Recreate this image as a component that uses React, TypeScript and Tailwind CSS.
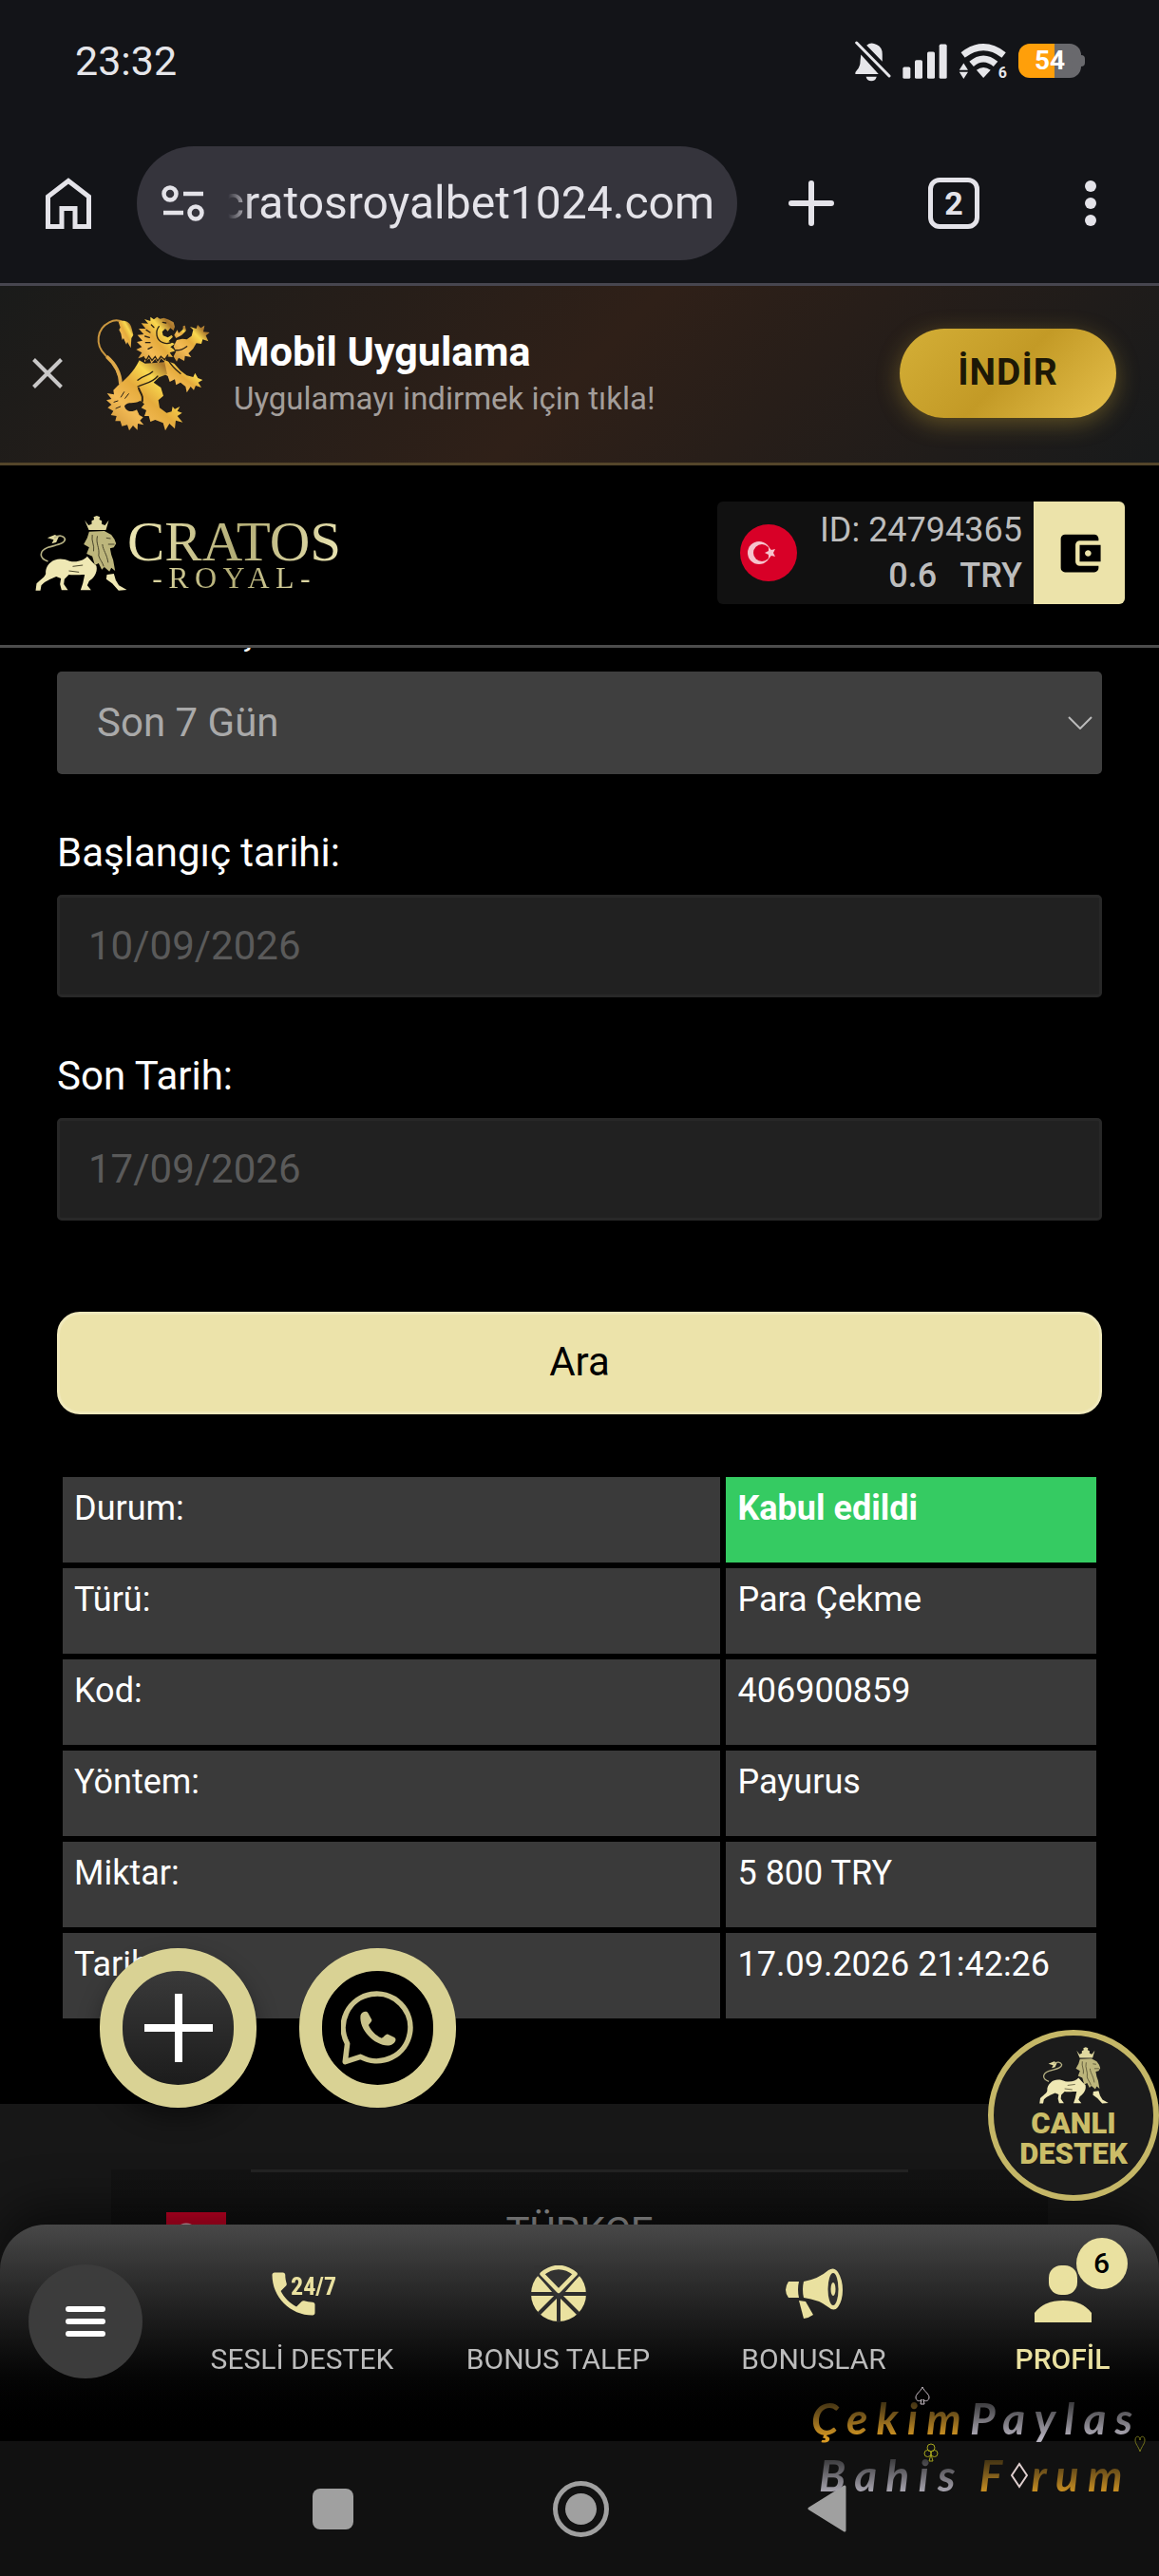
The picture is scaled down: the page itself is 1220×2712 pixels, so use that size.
import { type ReactNode } from "react";
import { MdAccountBalanceWallet, MdPhone } from "react-icons/md";

function RampantLion() {
  return (
    <svg viewBox="210 20 366 366" className="size-[122px]" aria-hidden="true">
      <defs>
        <linearGradient id="gold" x1="0" y1="1" x2="1" y2="0">
          <stop offset="0" stopColor="#c98f35" />
          <stop offset="0.3" stopColor="#f3bb55" />
          <stop offset="0.5" stopColor="#e5ab3c" />
          <stop offset="0.68" stopColor="#f9d84f" />
          <stop offset="0.84" stopColor="#a9762c" />
          <stop offset="1" stopColor="#dba548" />
        </linearGradient>
      </defs>
      <path d="M291 238C288 195 266 168 243 146C208 112 216 62 255 42C270 34 288 34 304 44" fill="none" stroke="#c9963f" strokeWidth="6" />
      <path d="M291 238C290 195 268 168 247 150" fill="none" stroke="#dfa94a" strokeWidth="11" />
      <g fill="url(#gold)">
        <path d="M284 40C300 33 322 38 326 62L331 82L325 92L323 123L312 104L309 112L300 92L296 98L292 78L286 66L290 58Z" />
        <path d="M385 25L396 33L406 25L415 31L428 28L444 34L458 42L462 56L458 68L448 60L440 70L432 62L422 72L425 84L440 90L452 82L456 88L442 102L462 110L448 120L465 132L446 138L456 152L436 150L432 168L418 156L410 172L400 158L388 172L382 156L366 168L366 150L346 156L358 138L340 128L358 120L342 104L360 100L344 82L364 80L348 62L370 62L356 45L378 46L366 32L385 38Z" />
        <path d="M460 82L470 66L474 76L488 64L488 54L494 52L498 68L484 82L466 92Z" />
        <path d="M458 118L468 98L486 94L500 96L515 85L520 66L510 56L530 62L534 50L544 60L556 52L552 72L572 74L560 84L568 102L550 96L546 110L530 108L520 125L505 140L514 152L494 148L492 164L474 154L468 166L458 150L466 134Z" />
        <path d="M430 162L460 172L480 195L500 210L520 215L526 202L535 218L550 224L536 232L546 248L528 242L522 256L512 245L500 264L496 245L480 232L466 240L462 222L446 230L440 212L420 200Z" />
        <path d="M350 162L368 172L430 168L438 206L412 216L395 232L418 248L426 274L410 288L414 312L436 328L452 324L455 308L462 316L478 308L470 322L485 328L470 338L487 358L465 352L462 378L445 362L432 384L425 360L400 350L385 356L380 338L366 338L372 320L356 312L366 300L352 290C332 302 315 290 303 306C306 324 326 328 342 318L350 335L362 342L352 352L364 366L345 362L344 382L330 368L318 384L312 366L295 370L290 354L274 354L278 338L260 335L268 322L250 312L262 302L246 288L262 284L248 266L270 270L268 256L282 242C304 225 332 200 350 162Z" />
      </g>
      <g fill="none" stroke="#2b2114" strokeWidth="4" strokeLinecap="round">
        <path d="M412 55C400 70 402 98 424 106C440 112 452 106 458 98" />
        <path d="M362 152L372 162L380 148L390 162L400 150L408 164L418 150L430 160L440 146" />
        <path d="M345 245C362 235 390 235 408 212" />
        <path d="M348 250C350 262 368 275 356 300" strokeWidth="6" />
        <path d="M345 225C360 210 378 212 392 198" />
        <path d="M440 160C452 180 462 190 480 204M462 130C480 132 490 126 500 118" />
        <path d="M372 66L384 74M368 86L382 90M370 106L384 106M378 126L390 120M388 50L396 58M424 42L434 44" />
        <path d="M292 278L302 262M305 282L316 268M270 294L282 290M276 314L290 308" strokeWidth="3" />
      </g>
    </svg>
  );
}

function CrownedLion({ className }: { className: string }) {
  return (
    <svg viewBox="22 652 290 237" className={className} aria-hidden="true">
      <g fill="#e0d9a0">
        <path d="M178 666L190 682L200 678L200 668L208 664L206 656L216 652L226 656L224 664L232 668L232 678L242 682L254 666L245 697L191 697Z" />
        <path d="M60 722L84 712L96 718L88 736L74 740L80 728Z" />
        <path d="M70 800C85 785 110 786 130 795C155 800 175 792 186 780L202 798L215 810C220 832 205 850 192 858L186 872L198 887L165 887L172 866L178 838C165 838 140 840 128 838L114 852L112 868L125 887L105 887L100 868L103 850L88 844C70 852 50 860 41 872L38 888L23 888L26 866C40 852 52 846 55 835C54 820 60 808 70 800Z" fill="#efe8b4" />
        <path d="M248 838L270 835L276 855L286 872L311 886L285 888L265 866L246 852Z" fill="#efe8b4" />
      </g>
      <path d="M62 796C34 786 32 764 62 752C86 744 114 742 116 726C112 714 96 712 82 722" fill="none" stroke="#b5b083" strokeWidth="5" />
      <path d="M192 702L240 700L262 712L272 726L277 740L270 752L258 755L262 775L268 792L274 826L262 816L256 828L240 814L232 822L222 802L210 808L202 780L184 772L192 752L175 742L186 722Z" fill="#bdb67c" />
      <g fill="none" stroke="#4a462c" strokeWidth="3">
        <path d="M202 712C198 734 210 744 206 764M218 716C212 740 226 752 222 778C226 792 234 798 238 812M234 742C236 762 248 772 252 800" />
        <path d="M246 722L260 724M252 742L272 742" />
        <path d="M140 812L172 808M128 826L160 830" />
      </g>
    </svg>
  );
}

function StatusBar() {
  return (
    <div className="flex h-32 items-center justify-between pr-[78px] pl-[79px] text-[#e6e6ea]">
      <span className="text-[43px] leading-[48px]">23:32</span>
      <div className="flex items-center">
        <svg viewBox="62 60 118 130" className="mr-3 h-[43px] w-[39px]" fill="currentColor" aria-hidden="true">
          <path d="M102 74Q116 62 134 72Q152 80 152 102V126Z" />
          <path d="M84 104L140 166H66Q64 160 72 152Q82 142 82 122Z" />
          <path d="M100 174H134Q130 188 117 188Q104 188 100 174Z" />
          <path d="M70 66L174 172" stroke="currentColor" strokeWidth="9" strokeLinecap="round" />
        </svg>
        <svg viewBox="212 74 141 110" className="mr-3 h-[37px] w-[47px]" fill="currentColor" aria-hidden="true">
          <rect x="213" y="147" width="24" height="37" rx="5" />
          <rect x="251" y="125" width="24" height="59" rx="5" />
          <rect x="290" y="99" width="24" height="85" rx="5" />
          <rect x="328" y="75" width="24" height="109" rx="5" />
        </svg>
        <div className="relative mr-3 h-[37px] w-[51px]">
          <svg viewBox="387 74 152 112" className="size-full" fill="currentColor" aria-hidden="true">
            <path d="M400 110Q465 60 530 110" fill="none" stroke="currentColor" strokeWidth="21" />
            <path d="M427 139Q465 106 504 139" fill="none" stroke="currentColor" strokeWidth="21" />
            <path d="M443 158Q465 142 488 158L465 183Z" />
            <path d="M388 158L402 136L416 158ZM388 164H416L402 186Z" />
          </svg>
          <span className="absolute right-0 -bottom-[2px] text-[16px] leading-4 font-bold">6</span>
        </div>
        <div className="flex items-center">
          <div className="flex h-9 w-[66px] items-center justify-center rounded-xl bg-linear-to-r from-[#ff9f0a] from-58% to-[#69696d] to-58% text-[28px] leading-9 font-bold text-white">54</div>
          <div className="h-3 w-1 rounded-r-sm bg-[#69696d]" />
        </div>
      </div>
    </div>
  );
}

function BrowserBar() {
  return (
    <div className="flex h-[173px] items-center border-b-3 border-[#47464f] pt-[2px] pr-[66px] pl-12 text-[#e4e3e9]">
      <button aria-label="Ana sayfa">
        <svg viewBox="0 0 48 54" className="h-[54px] w-12" fill="none" stroke="currentColor" strokeWidth="5" aria-hidden="true">
          <path d="M2.500 51.500V20L24 3.500L45.500 20V51.500H31V32.500H17V51.500Z" />
        </svg>
      </button>
      <div className="ml-12 flex h-[120px] min-w-0 flex-1 items-center rounded-full bg-[#35343c] pr-6 pl-[26px]">
        <svg viewBox="0 0 46 38" className="h-[38px] w-[46px] shrink-0" fill="none" stroke="currentColor" strokeWidth="4.500" aria-hidden="true">
          <circle cx="9" cy="9" r="6.500" />
          <circle cx="36" cy="29" r="6.500" />
          <path d="M23 9H44M2 29H23" />
        </svg>
        <div className="ml-6 flex min-w-0 flex-1 justify-end overflow-hidden mask-l-from-95% text-[48px] leading-[60px]">
          <span>cratosroyalbet1024.com</span>
        </div>
      </div>
      <button className="ml-[54px]" aria-label="Yeni sekme">
        <svg viewBox="0 0 48 48" className="size-12" stroke="currentColor" strokeWidth="6" strokeLinecap="round" aria-hidden="true">
          <path d="M24 3V45M3 24H45" />
        </svg>
      </button>
      <button className="ml-[99px] flex size-[54px] items-center justify-center rounded-xl border-[5px] border-current text-[34px] leading-10 font-bold">2</button>
      <button className="ml-[111px] flex flex-col gap-[6px]" aria-label="Menü">
        <span className="size-3 rounded-full bg-current" />
        <span className="size-3 rounded-full bg-current" />
        <span className="size-3 rounded-full bg-current" />
      </button>
    </div>
  );
}

function AppBanner() {
  return (
    <section className="flex h-[189px] items-center border-b-3 border-[#54452a] bg-linear-[135deg] from-[#1a1b1a] via-[#2f2018] to-[#181a1b] pr-[45px] pb-[3px] pl-[34px]">
      <button aria-label="Kapat" className="text-[#c9c8c8]">
        <svg viewBox="0 0 32 32" className="size-8" stroke="currentColor" strokeWidth="4" aria-hidden="true">
          <path d="M1.500 1.500L30.500 30.500M30.500 1.500L1.500 30.500" />
        </svg>
      </button>
      <div className="ml-[34px]"><RampantLion /></div>
      <div className="ml-6 flex-1">
        <h2 className="text-[43px] leading-[54px] font-bold text-white">Mobil Uygulama</h2>
        <p className="text-[33px] leading-[45px] text-[#a39e9b]">Uygulamayı indirmek için tıkla!</p>
      </div>
      <button className="h-[94px] w-[228px] rounded-full bg-linear-[135deg] from-[#d4af37] via-[#c39a26] to-[#e6c04c] text-[39px] font-bold tracking-wide text-[#1d1806] shadow-[0_6px_24px_rgba(212,175,55,0.35)]">İNDİR</button>
    </section>
  );
}

function TurkishFlag({ className }: { className: string }) {
  return (
    <svg viewBox="0 0 60 60" className={className} preserveAspectRatio="xMidYMid slice" aria-hidden="true">
      <rect width="60" height="60" fill="#d80027" />
      <circle cx="20" cy="30" r="12" fill="#f6c3cc" />
      <circle cx="23" cy="30" r="9" fill="#d80027" />
      <path d="M26 30L30 28L30 24L33 27L37 26L35 30L37 34L33 33L30 36L30 32Z" fill="#f6c3cc" />
    </svg>
  );
}

function SiteHeader() {
  return (
    <header className="relative z-10 flex h-48 items-center justify-between border-b-3 border-[#4c4c4c] bg-black pr-9 pb-[5px] pl-[37px]">
      <a href="#" aria-label="Cratos Royal" className="flex items-end">
        <CrownedLion className="h-[79px] w-[97px]" />
        <span className="flex flex-col items-center bg-linear-[105deg] from-[#f0eab6] via-[#b3ad76] to-[#eee8b6] bg-clip-text font-['Liberation_Serif',serif] text-transparent">
          <span className="text-[59px] leading-[50px]">CRATOS</span>
          <span className="text-[32px] leading-[27px] tracking-[0.2em]">-ROYAL-</span>
        </span>
      </a>
      <div className="flex h-[108px] overflow-hidden rounded-md bg-[#111] text-[#bdbdbd]">
        <TurkishFlag className="mr-6 ml-6 size-[60px] self-center rounded-full" />
        <div className="flex flex-col justify-center pr-3 text-right text-[36px] leading-12">
          <span>ID: 24794365</span>
          <span className="flex justify-end gap-6 font-medium"><span>0.6</span><span>TRY</span></span>
        </div>
        <button aria-label="Cüzdan" className="flex w-24 items-center justify-center bg-[#ece3aa] text-black">
          <MdAccountBalanceWallet className="size-[53px]" />
        </button>
      </div>
    </header>
  );
}

function DateField({ id, label, value }: { id: string; label: string; value: string }) {
  return (
    <div className="flex flex-col gap-5">
      <label htmlFor={id} className="text-[42px] leading-12 text-white">{label}</label>
      <input id={id} type="text" readOnly value={value} className="h-[108px] w-full rounded-[5px] border-3 border-[#282828] bg-[#212121] px-[30px] pb-[2px] text-[42px] text-[#5a5a5a] outline-none" />
    </div>
  );
}

const details = [
  ["Durum:", "Kabul edildi"],
  ["Türü:", "Para Çekme"],
  ["Kod:", "406900859"],
  ["Yöntem:", "Payurus"],
  ["Miktar:", "5 800 TRY"],
  ["Tarih:", "17.09.2026 21:42:26"],
];

function History() {
  return (
    <main className="-mt-[43px] px-[60px] pb-[84px]">
      <form className="flex flex-col gap-[59px]" onSubmit={(e) => e.preventDefault()}>
        <div className="flex flex-col gap-5">
          <label htmlFor="period" className="text-[42px] leading-12 text-white">Dönem seçin:</label>
          <div className="relative">
            <select id="period" className="h-[108px] w-full appearance-none rounded-[5px] bg-[#3f3f3f] px-[42px] pb-[2px] text-[42px] text-[#a9a9a9] outline-none">
              <option>Son 7 Gün</option>
            </select>
            <svg viewBox="0 0 26 14" className="pointer-events-none absolute top-[47px] right-[10px] h-[14px] w-[26px]" fill="none" stroke="#bbb" strokeWidth="2" aria-hidden="true">
              <path d="M1 1L13 13L25 1" />
            </svg>
          </div>
        </div>
        <DateField id="start" label="Başlangıç tarihi:" value="10/09/2026" />
        <DateField id="end" label="Son Tarih:" value="17/09/2026" />
        <button type="submit" className="mt-[37px] h-[108px] rounded-[24px] border-3 border-[#f0e9bb] bg-[#ece3aa] pb-[3px] text-[42px] text-black">Ara</button>
      </form>
      <table className="mt-[60px] w-full table-fixed border-separate border-spacing-[6px] text-left text-[36px] leading-[42px] text-white">
        <colgroup>
          <col className="w-[64%]" />
          <col />
        </colgroup>
        <tbody>
          {details.map(([name, value], i) => (
            <tr key={name} className="h-[90px]">
              <th scope="row" className="bg-[#3a3a3a] px-3 pt-3 align-top font-normal">{name}</th>
              <td className={i === 0 ? "bg-[#35cb62] px-3 pt-3 align-top font-bold" : "bg-[#3a3a3a] px-3 pt-3 align-top"}>{value}</td>
            </tr>
          ))}
        </tbody>
      </table>
    </main>
  );
}

function SiteFooter() {
  return (
    <footer className="flex-1 bg-[#171717] px-[117px] pt-[69px]">
      <div className="bg-linear-to-b from-[#131313] to-[#101010]">
        <div className="mx-[147px] h-[3px] bg-[#232323]" />
        <div className="relative mt-[39px] flex items-center justify-center text-[42px] leading-12 text-[#a8a8a8]">
          <TurkishFlag className="absolute top-[3px] left-[58px] h-12 w-[63px]" />
          <span>TÜRKÇE</span>
        </div>
      </div>
    </footer>
  );
}

function FloatingButtons() {
  return (
    <>
      <div className="fixed bottom-[493px] left-[105px] z-20 flex gap-[45px]">
        <button aria-label="Ekle" className="flex h-[168px] w-[165px] items-center justify-center rounded-full border-24 border-[#d9d294] bg-linear-to-b from-[#3a3a3a] to-[#1c1c1c] shadow-[0_12px_24px_rgba(0,0,0,0.4)]">
          <svg viewBox="0 0 72 72" className="size-[72px]" stroke="#fff" strokeWidth="8" aria-hidden="true">
            <path d="M36 0V72M0 36H72" />
          </svg>
        </button>
        <a href="#whatsapp" aria-label="WhatsApp" className="flex h-[168px] w-[165px] items-center justify-center rounded-full border-24 border-[#d9d294] bg-black">
          <svg viewBox="830 190 236 236" className="size-[78px]" aria-hidden="true">
            <path d="M850 358A107 107 0 1 1 892 400L843 416Z" fill="none" stroke="#c9c28a" strokeWidth="17" strokeLinejoin="round" />
            <path d="M892 268C896 256 910 252 916 260L928 282C928 290 918 294 918 300C926 318 940 332 958 340C964 342 970 328 978 328L1000 338C1010 344 1000 360 986 363C944 370 886 318 892 268Z" fill="#c9c28a" />
          </svg>
        </a>
      </div>
      <a href="#destek" className="fixed right-0 bottom-[395px] z-20 flex size-[180px] flex-col items-center rounded-full border-6 border-[#c5b767] bg-[#1b1b1b] pt-[11px] text-center text-[31px] leading-8 font-black text-[#cbbd68]">
        <CrownedLion className="h-[62px] w-[73px]" />
        <span className="mt-1">CANLI</span>
        <span>DESTEK</span>
      </a>
    </>
  );
}

function WheelIcon() {
  return (
    <svg viewBox="0 0 60 60" className="size-[60px]" aria-hidden="true">
      <circle cx="30" cy="30" r="29" fill="#eae1a0" />
      <path d="M0 30H60M30 30V60M9 51L51 9M9 9L51 51" stroke="#2c2c2c" strokeWidth="4" />
      <path d="M30 36L4 6V-4H56V6Z" fill="#323232" />
      <path d="M12.500 9Q30 -5 47.500 9L30 27Z" fill="none" stroke="#eae1a0" strokeWidth="4.500" strokeLinejoin="round" />
    </svg>
  );
}

function MegaphoneIcon() {
  return (
    <svg viewBox="0 0 62 60" className="h-[60px] w-[62px]" fill="#eae1a0" aria-hidden="true">
      <path d="M4 17H15Q13 25 15 34H4Q-2 26 4 17Z" />
      <path d="M20 17Q36 14 46 5Q52 1 56 7Q61 15 61 26Q61 37 56 44Q52 49 46 44Q36 36 20 34Q18 25 20 17Z" />
      <ellipse cx="51" cy="25" rx="5.500" ry="17" fill="#303030" />
      <ellipse cx="51" cy="25" rx="2.500" ry="7" />
      <path d="M15 37L22 38L30 52Q26 55 20 56Z" />
    </svg>
  );
}

function NavItem({ label, children, active = false }: { label: string; children: ReactNode; active?: boolean }) {
  return (
    <a href="#" className={active ? "flex flex-col items-center pl-[26px] font-medium text-[#eae1a0]" : "flex flex-col items-center text-[#bcbcbc]"}>
      <span className="flex h-[62px] items-center">{children}</span>
      <span className="mt-5 text-[30px] leading-9 whitespace-nowrap">{label}</span>
    </a>
  );
}

function BottomNav() {
  return (
    <nav className="grid h-[228px] grid-cols-[183fr_270fr_269fr_269fr_229fr] rounded-t-[48px] bg-linear-to-b from-[#484848] to-black pt-[42px] shadow-[0_-18px_48px_rgba(0,0,0,0.5)]">
      <div className="pl-[30px]">
        <button aria-label="Menü" className="flex size-[120px] flex-col items-center justify-center gap-[7px] rounded-full bg-[#3c3c3c]">
          <span className="h-[6px] w-[42px] rounded-full bg-white" />
          <span className="h-[6px] w-[42px] rounded-full bg-white" />
          <span className="h-[6px] w-[42px] rounded-full bg-white" />
        </button>
      </div>
      <NavItem label="SESLİ DESTEK">
        <span className="relative block h-[60px] w-[62px] text-[#eae1a0]">
          <MdPhone className="absolute top-0 -left-[8px] size-[60px]" />
          <span className="absolute top-[8px] left-[19px] font-['Liberation_Sans_Narrow','Roboto_Condensed',Roboto,sans-serif] text-[26px] leading-7 font-bold">24/7</span>
        </span>
      </NavItem>
      <NavItem label="BONUS TALEP"><WheelIcon /></NavItem>
      <NavItem label="BONUSLAR"><MegaphoneIcon /></NavItem>
      <NavItem label="PROFİL" active>
        <span className="relative">
          <svg viewBox="0 0 60 60" className="size-[60px]" fill="#eae1a0" aria-hidden="true">
            <rect x="15" y="0" width="30" height="31" rx="13" />
            <path d="M0 60V50Q10 37 30 37Q50 37 60 50V60Z" />
          </svg>
          <span className="absolute -top-[29px] -right-[38px] flex size-[54px] items-center justify-center rounded-full bg-[#eae1a0] text-[30px] leading-8 font-medium text-black">6</span>
        </span>
      </NavItem>
    </nav>
  );
}

function SystemNav() {
  return (
    <div className="flex h-[142px] items-center justify-center bg-[#111] text-[#a0a0a0]">
      <button aria-label="Son uygulamalar" className="size-[43px] rounded-[8px] bg-current" />
      <button aria-label="Ana ekran" className="mr-[209px] ml-[210px] flex size-[59px] items-center justify-center rounded-full border-[5px] border-current">
        <span className="size-[33px] rounded-full bg-current" />
      </button>
      <button aria-label="Geri">
        <svg viewBox="0 0 41 50" className="h-[50px] w-[41px]" fill="currentColor" aria-hidden="true">
          <path d="M2 25L39 2V48Z" stroke="currentColor" strokeWidth="3" strokeLinejoin="round" />
        </svg>
      </button>
    </div>
  );
}

const goldText = "bg-linear-to-b from-[#3d2f12] from-20% to-[#d99a22] to-85% bg-clip-text text-transparent";
const silverText = "bg-linear-to-b from-[#38383a] from-20% to-[#b5b1bd] to-85% bg-clip-text text-transparent";

function Watermark() {
  return (
    <div className="pointer-events-none absolute right-0 bottom-[76px] w-[366px] font-[Lato,sans-serif] text-[46px] leading-[60px] font-bold tracking-[0.2em] italic">
      <div className="relative flex">
        <span className={goldText}>Çekim</span>
        <span className={silverText}>Paylas</span>
        <svg viewBox="0 0 16 20" className="absolute -top-[4px] left-[109px] h-5 w-4" fill="none" stroke="#cfc4cc" strokeWidth="1" aria-hidden="true">
          <path d="M8 1C10 6 15 8 15 12C15 16 10 17 9 14L10 19H6L7 14C6 17 1 16 1 12C1 8 6 6 8 1Z" />
        </svg>
        <svg viewBox="0 0 12 18" className="absolute right-[14px] -bottom-[6px] h-[18px] w-3" fill="none" stroke="#77771c" strokeWidth="1" aria-hidden="true">
          <path d="M6 17C4 11 1 9 1 5C1 0 6 0 6 5C6 0 11 0 11 5C11 9 8 11 6 17Z" />
        </svg>
      </div>
      <div className="relative flex items-center gap-4 pl-2">
        <span className={silverText}>Bahis</span>
        <span className="flex items-center">
          <span className={goldText}>F</span>
          <svg viewBox="0 0 18 28" className="mr-[3px] h-7 w-[18px]" fill="none" stroke="#e0d0d0" strokeWidth="2" aria-hidden="true">
            <path d="M9 2L17 14L9 26L1 14Z" />
          </svg>
          <span className={goldText}>rum</span>
        </span>
        <svg viewBox="0 0 16 20" className="absolute -top-[4px] left-[118px] h-5 w-4" fill="none" stroke="#a3a31d" strokeWidth="1" aria-hidden="true">
          <circle cx="8" cy="5" r="4" />
          <circle cx="4.500" cy="11" r="3.500" />
          <circle cx="11.500" cy="11" r="3.500" />
          <path d="M8 12L6 19H10Z" />
        </svg>
      </div>
    </div>
  );
}

export default function App() {
  return (
    <div lang="tr" className="flex min-h-screen flex-col bg-black font-[Roboto,sans-serif]">
      <div className="bg-[#131418]">
        <StatusBar />
        <BrowserBar />
      </div>
      <AppBanner />
      <SiteHeader />
      <History />
      <SiteFooter />
      <FloatingButtons />
      <div className="fixed inset-x-0 bottom-0 z-10">
        <BottomNav />
        <SystemNav />
        <Watermark />
      </div>
    </div>
  );
}
